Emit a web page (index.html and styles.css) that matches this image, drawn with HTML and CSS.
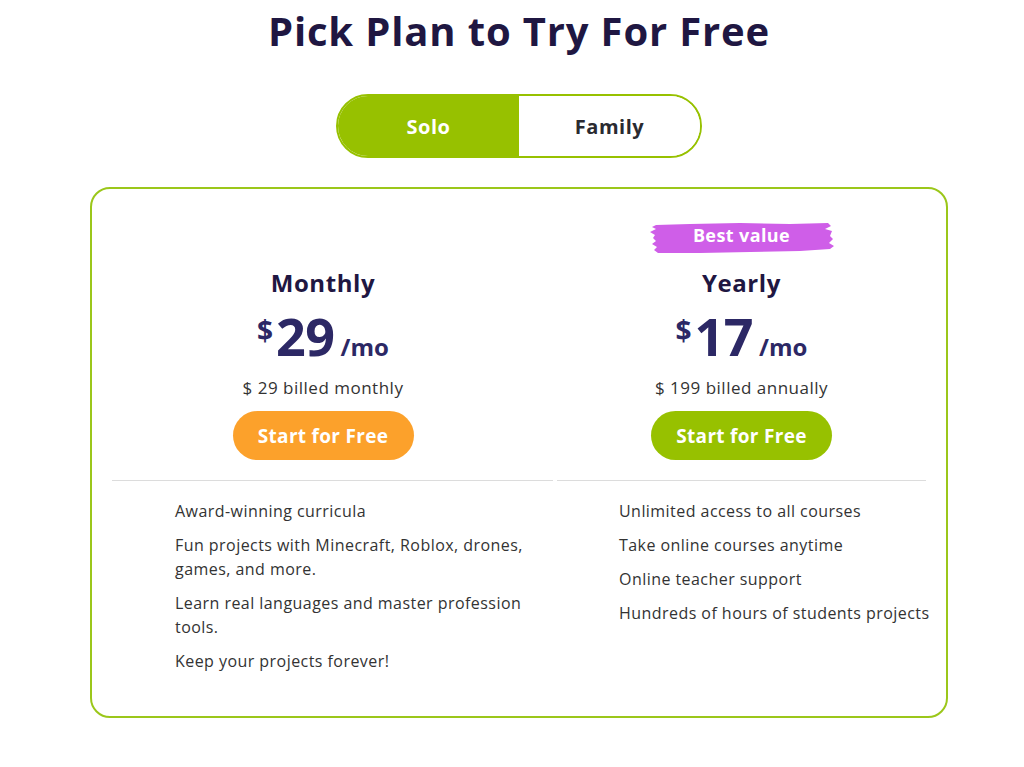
FILE: index.html
```html
<!DOCTYPE html>
<html lang="en">
<head>
<meta charset="utf-8">
<title>Pick Plan</title>
<link rel="stylesheet" href="styles.css">
</head>
<body>
<main class="page">
  <h1 class="title">Pick Plan to Try For Free</h1>
  <div class="toggle">
    <button class="toggle-btn active">Solo</button>
    <button class="toggle-btn">Family</button>
  </div>
  <section class="card">
    <div class="plan plan-left">
      <div class="plan-head head-left">
        <div class="badge-slot"></div>
        <h2 class="plan-name">Monthly</h2>
        <div class="price"><span class="cur">$</span><span class="amount">29</span><span class="per">/mo</span></div>
        <p class="billed">$ 29 billed monthly</p>
        <a class="cta cta-orange" href="#">Start for Free</a>
      </div>
      <ul class="features">
        <li>Award-winning curricula</li>
        <li>Fun projects with Minecraft, Roblox, drones, games, and more.</li>
        <li>Learn real languages and master profession tools.</li>
        <li>Keep your projects forever!</li>
      </ul>
    </div>
    <div class="plan plan-right">
      <div class="plan-head">
        <div class="badge-slot">
          <div class="badge">
            <svg class="brush" viewBox="0 0 184 32" preserveAspectRatio="none" aria-hidden="true">
              <path d="M6 3 L40 2 L90 1 L140 2 L178 1 L181 4 L175 7 L182 9 L180 14 L183 17 L179 21 L184 24 L180 27 L150 29 L100 30 L50 31 L8 31 L4 28 L7 25 L2 22 L6 19 L3 16 L5 13 L0 10 L6 7 L2 5 Z" fill="#cf5ee8"/>
            </svg>
            <span class="badge-text">Best value</span>
          </div>
        </div>
        <h2 class="plan-name">Yearly</h2>
        <div class="price"><span class="cur">$</span><span class="amount">17</span><span class="per">/mo</span></div>
        <p class="billed">$ 199 billed annually</p>
        <a class="cta cta-green" href="#">Start for Free</a>
      </div>
      <ul class="features features-right">
        <li>Unlimited access to all courses</li>
        <li>Take online courses anytime</li>
        <li>Online teacher support</li>
        <li>Hundreds of hours of students projects</li>
      </ul>
    </div>
  </section>
</main>
</body>
</html>
```
FILE: styles.css
```css
* { box-sizing: border-box; }
body {
  margin: 0;
  background: #ffffff;
  font-family: "Open Sans", "Noto Sans", Arial, sans-serif;
  color: #333333;
}
.page {
  display: flex;
  flex-direction: column;
  align-items: center;
  padding: 6px 0 0 14px;
}
.title {
  margin: 0;
  font-size: 40px;
  line-height: 50px;
  font-weight: 700;
  color: #1f1742;
  letter-spacing: 0.85px;
}
.toggle {
  margin-top: 38px;
  display: flex;
  width: 366px;
  height: 64px;
  border: 2px solid #97c100;
  border-radius: 32px;
  overflow: hidden;
}
.toggle-btn {
  flex: 1;
  border: 0;
  background: #ffffff;
  font-family: inherit;
  font-size: 20px;
  font-weight: 700;
  letter-spacing: 0.5px;
  color: #2a2a30;
  cursor: pointer;
}
.toggle-btn.active {
  background: #97c100;
  color: #ffffff;
}
.card {
  margin-top: 29px;
  width: 858px;
  border: 2px solid #9bc71a;
  border-radius: 20px;
  padding: 33px 20px 43px;
  display: grid;
  grid-template-columns: 441px 369px;
  column-gap: 4px;
}
.plan-head {
  display: flex;
  flex-direction: column;
  align-items: center;
  padding-bottom: 20px;
  border-bottom: 1px solid #dcdcdc;
}
.head-left { padding-right: 19px; }
.badge-slot {
  height: 32px;
  display: flex;
  justify-content: center;
}
.badge {
  position: relative;
  width: 184px;
  height: 32px;
  display: flex;
  align-items: center;
  justify-content: center;
}
.brush {
  position: absolute;
  inset: 0;
  width: 100%;
  height: 100%;
}
.badge-text {
  position: relative;
  color: #ffffff;
  font-weight: 700;
  font-size: 18px;
  line-height: 24px;
  letter-spacing: 0.4px;
  margin-top: -6px;
}
.plan-name {
  margin: 14px 0 0;
  font-size: 24px;
  line-height: 30px;
  font-weight: 700;
  letter-spacing: 0.6px;
  color: #1f1742;
}
.price {
  display: flex;
  align-items: baseline;
  color: #2c2865;
  font-weight: 700;
  margin-top: 6px;
  height: 64px;
}
.cur {
  font-size: 28px;
  align-self: flex-start;
  margin-top: 7px;
  margin-right: 3px;
}
.amount {
  font-size: 52px;
  line-height: 64px;
  letter-spacing: -0.5px;
}
.per {
  font-size: 24px;
  margin-left: 6px;
}
.billed {
  margin: 8px 0 0;
  font-size: 17px;
  line-height: 24px;
  letter-spacing: 0.5px;
  color: #333333;
}
.cta {
  margin-top: 11px;
  width: 181px;
  height: 49px;
  border-radius: 25px;
  display: flex;
  align-items: center;
  justify-content: center;
  color: #ffffff;
  font-size: 19px;
  font-weight: 700;
  letter-spacing: 0.3px;
  text-decoration: none;
}
.cta-orange { background: #fca12b; }
.cta-green { background: #97c100; }
.features {
  list-style: none;
  margin: 18px 0 0;
  padding: 0 0 0 63px;
}
.features-right {
  padding-left: 62px;
}
.features-right li {
  white-space: nowrap;
}
.features li {
  font-size: 16px;
  line-height: 24px;
  letter-spacing: 0.45px;
  color: #333333;
  margin-bottom: 10px;
}
.features li:last-child { margin-bottom: 0; }
```
